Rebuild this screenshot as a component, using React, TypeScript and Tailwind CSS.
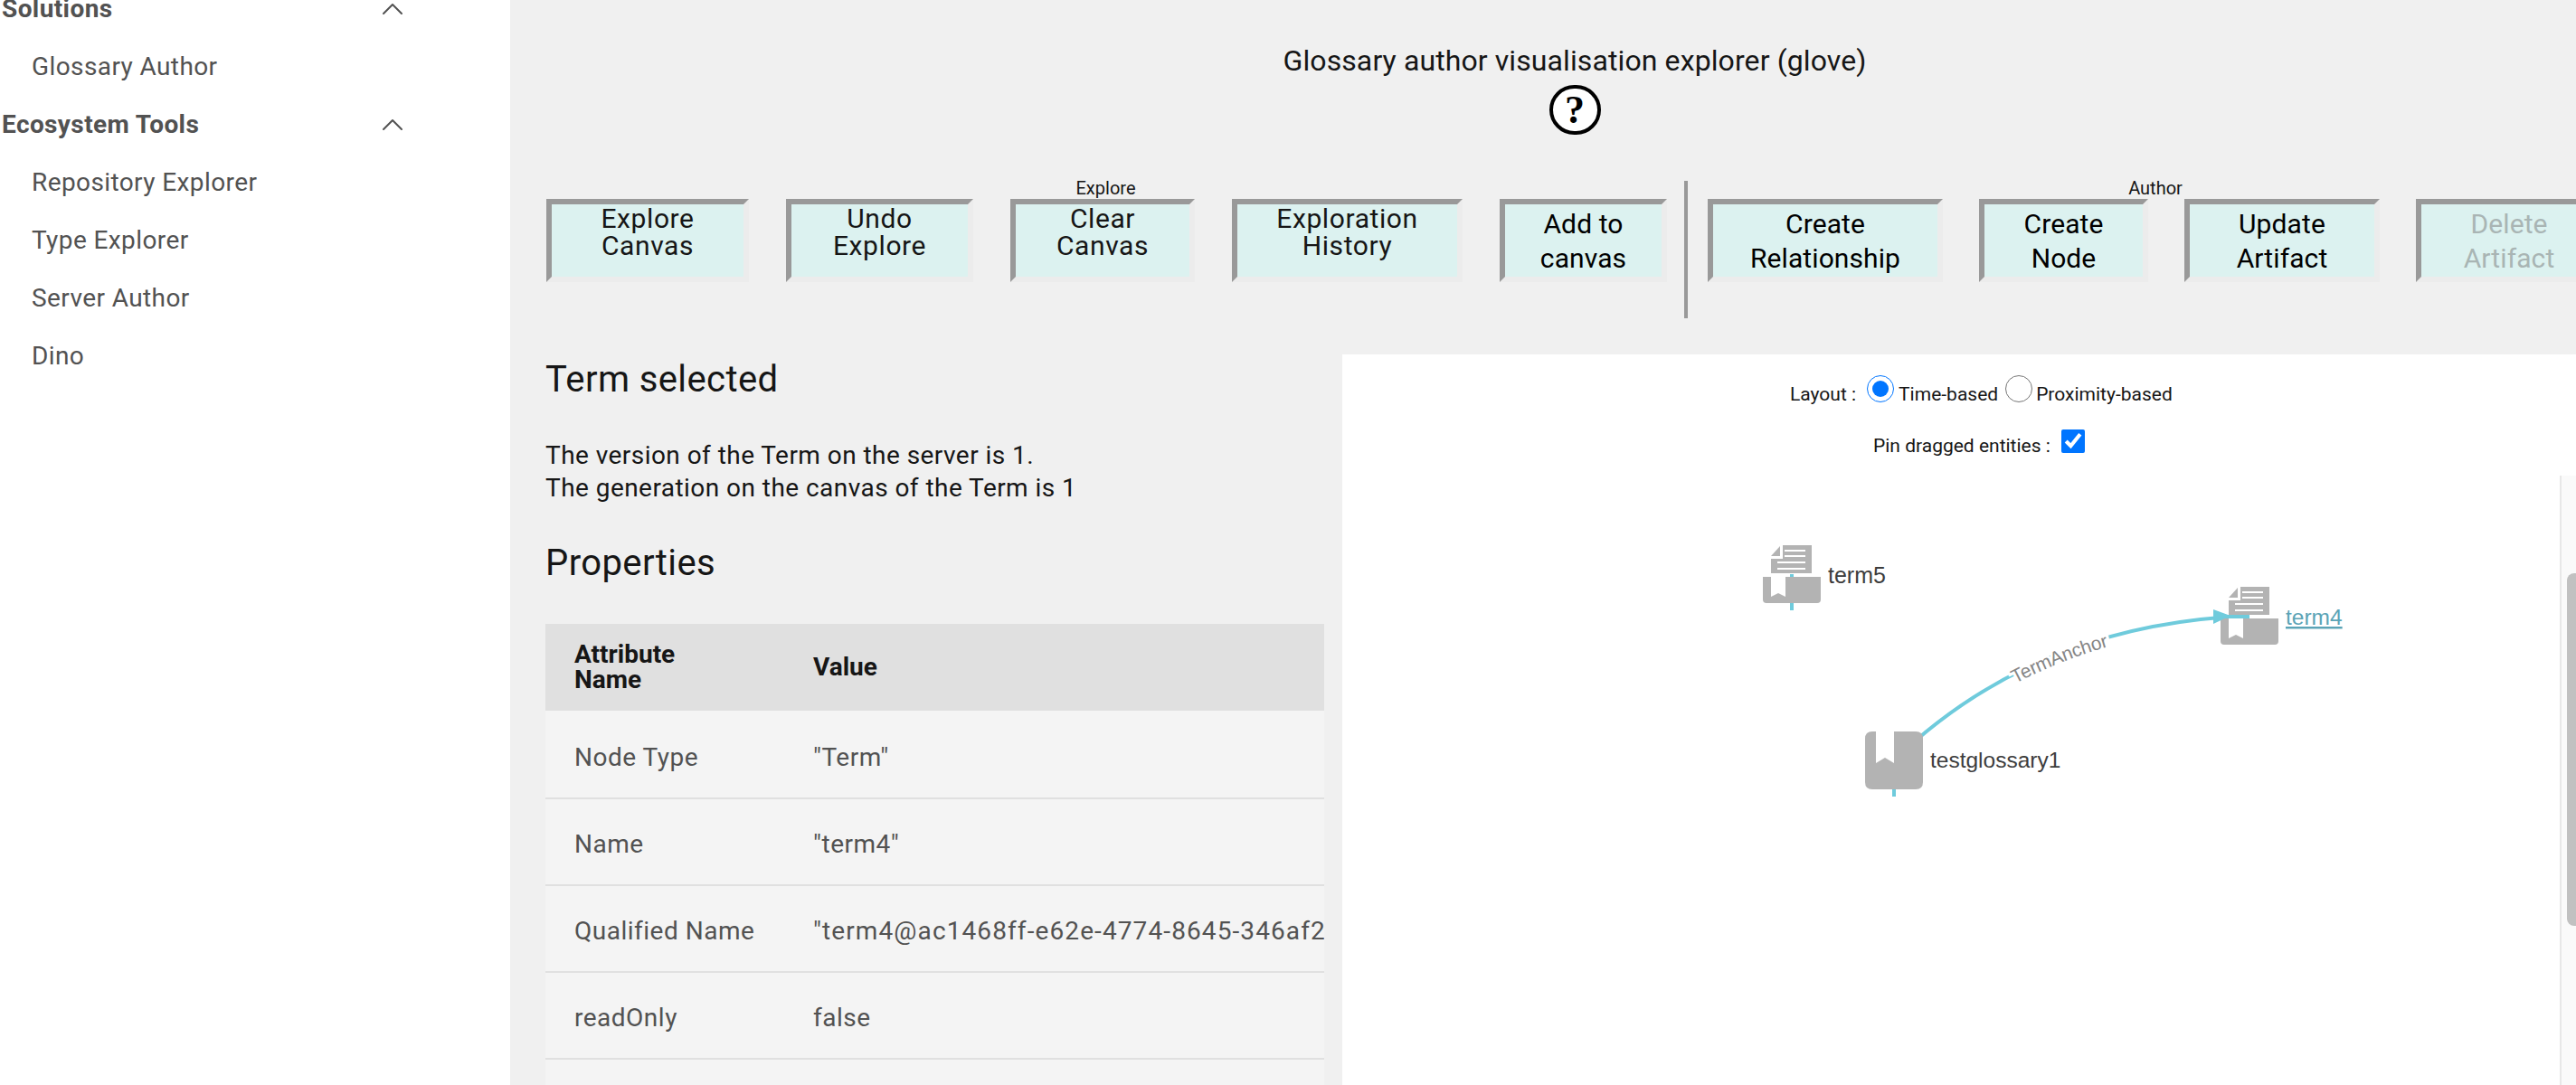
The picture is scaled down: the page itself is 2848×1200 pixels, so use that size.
import { ChevronUp } from 'lucide-react'

const exploreButtons = [
  { top: 'Explore', bottom: 'Canvas', width: 'w-[224px]' },
  { top: 'Undo', bottom: 'Explore', width: 'w-[207px]' },
  { top: 'Clear', bottom: 'Canvas', width: 'w-[204px]' },
  { top: 'Exploration', bottom: 'History', width: 'w-[255px]' },
]

const authorButtons = [
  { top: 'Create', bottom: 'Relationship', width: 'w-[260px]' },
  { top: 'Create', bottom: 'Node', width: 'w-[187px]' },
  { top: 'Update', bottom: 'Artifact', width: 'w-[216px]' },
  { top: 'Delete', bottom: 'Artifact', width: 'w-[206px]', disabled: true },
]

const rows = [
  { name: 'Node Type', value: '"Term"', tracking: 'tracking-[0.5px]' },
  { name: 'Name', value: '"term4"', tracking: 'tracking-[0.5px]' },
  { name: 'Qualified Name', value: '"term4@ac1468ff-e62e-4774-8645-346af2b5e7c1"', tracking: 'tracking-[1.1px]' },
  { name: 'readOnly', value: 'false', tracking: 'tracking-[0.5px]' },
  { name: '', value: '', tracking: '' },
]

function ToolButton({ top, bottom, width, tight, disabled }: { top: string; bottom: string; width: string; tight?: boolean; disabled?: boolean }) {
  const textColor = disabled ? 'text-[#a9b5b4]' : tight ? 'text-[#161616]' : 'text-black'
  return (
    <button
      className={`${width} ${textColor} h-[92px] shrink-0 border-[6px] border-t-[#999999] border-l-[#999999] border-r-[#ececec] border-b-[#ececec] bg-[#dcf2f0] text-center text-[30px] flex flex-col items-center ${tight ? 'leading-[30px] pt-[1px] tracking-[0.6px]' : 'leading-[38px] pt-[1px] justify-center tracking-[0.1px]'}`}
    >
      <span>{top}</span>
      <span>{bottom}</span>
    </button>
  )
}

function TermIcon({ x, y }: { x: number; y: number }) {
  return (
    <g transform={`translate(${x} ${y})`}>
      <path d="M9 12 L19 1 L19 12 Z" fill="#b3b3b3" />
      <path d="M22 0 H54 V31 H9 V15 H22 Z" fill="#b3b3b3" />
      <path d="M24 6 H47 M24 12 H47 M16 19 H47 M16 26 H47" stroke="#ffffff" strokeWidth="2" />
      <path d="M0 35 H64 V60 Q64 64 60 64 H4 Q0 64 0 60 Z" fill="#b3b3b3" />
      <path d="M9 35 H25 V57 L17 53 L9 57 Z" fill="#ffffff" />
    </g>
  )
}

function GraphCanvas() {
  const edge = 'M2094 841 Q2250 690 2487 681'
  return (
    <svg className="absolute inset-0" width="1364" height="808" viewBox="1484 392 1364 808">
      <path d="M1981 635 V675 M2094 870 V881" stroke="#6fcbdc" strokeWidth="4" fill="none" />
      <TermIcon x={1949} y={603} />
      <path id="edge-term-anchor" d={edge} stroke="#6fcbdc" strokeWidth="4" fill="none" />
      <path d="M2094 809 m-24 0 h48 q8 0 8 8 v48 q0 8 -8 8 h-48 q-8 0 -8 -8 v-48 q0 -8 8 -8 Z" fill="#b3b3b3" />
      <path d="M2074 809 H2094 V844 L2084 838 L2074 844 Z" fill="#ffffff" />
      <TermIcon x={2455} y={649} />
      <path d="M2447 682 H2487" stroke="#6fcbdc" strokeWidth="4" fill="none" />
      <path d="M2447 674 L2466 681 L2447 690 Z" fill="#6fcbdc" />
      {/* white copy behind the label cuts the edge line */}
      <text aria-hidden="true" fontFamily='"Liberation Sans", sans-serif' fontSize="21" fill="#ffffff" stroke="#ffffff" strokeWidth="6" dy="10">
        <textPath href="#edge-term-anchor" startOffset="50%" textAnchor="middle">TermAnchor</textPath>
      </text>
      <text fontFamily='"Liberation Sans", sans-serif' fontSize="21" fill="#858585" dy="10">
        <textPath href="#edge-term-anchor" startOffset="50%" textAnchor="middle">TermAnchor</textPath>
      </text>
      <text x="2021" y="645" fontFamily='"Liberation Sans", sans-serif' fontSize="25" fill="#3d3d3d">term5</text>
      <text x="2134" y="849" fontFamily='"Liberation Sans", sans-serif' fontSize="24.5" fill="#3d3d3d">testglossary1</text>
      <text x="2527" y="691" fontFamily='"Liberation Sans", sans-serif' fontSize="24.5" fill="#5ba4b6" textDecoration="underline">term4</text>
    </svg>
  )
}

export default function App() {
  return (
    <div className="flex h-[1200px] w-[2848px] overflow-hidden bg-white font-['Roboto',sans-serif]">
      {/* Side nav */}
      <aside className="w-[564px] shrink-0 -mt-[22px] text-[28px] text-[#525252] tracking-[0.4px]">
        <div className="h-16 flex items-center justify-between pl-[2px] pr-[110px] font-bold">
          <span>Solutions</span>
          <ChevronUp className="w-10 h-10" strokeWidth={1.2} />
        </div>
        <div className="h-16 flex items-center pl-[35px]">Glossary Author</div>
        <div className="h-16 flex items-center justify-between pl-[2px] pr-[110px] font-bold">
          <span>Ecosystem Tools</span>
          <ChevronUp className="w-10 h-10" strokeWidth={1.2} />
        </div>
        <div className="h-16 flex items-center pl-[35px]">Repository Explorer</div>
        <div className="h-16 flex items-center pl-[35px]">Type Explorer</div>
        <div className="h-16 flex items-center pl-[35px]">Server Author</div>
        <div className="h-16 flex items-center pl-[35px]">Dino</div>
      </aside>

      {/* Main area */}
      <main className="flex-1 overflow-hidden bg-[#f0f0f0]">
        <div className="w-[2354px]">
          <div className="h-[197px] pt-[46px] flex flex-col items-center">
            <h1 className="text-[32px] leading-[42px] tracking-[0.1px] text-[#161616]">Glossary author visualisation explorer (glove)</h1>
            <div className="mt-[6px] w-[57px] h-[55px] rounded-full border-[4px] border-black bg-white flex items-center justify-center font-['Liberation_Serif',serif] font-bold text-[44px] leading-none text-black">?</div>
          </div>

          {/* Toolbar */}
          <div className="h-[195px] flex pl-[40px]">
            <div className="flex flex-col items-center w-[1237px]">
              <div className="h-[23px] text-[20px] leading-[23px] text-[#161616]">Explore</div>
              <div className="flex gap-[41px] w-full">
                {exploreButtons.map((b) => (
                  <ToolButton key={b.top + b.bottom} {...b} tight />
                ))}
                <ToolButton top="Add to" bottom="canvas" width="w-[185px]" />
              </div>
            </div>
            <div className="ml-[21px] mr-[22px] mt-[3px] h-[152px] w-[4px] bg-[#999999]" />
            <div className="flex flex-col items-center w-[990px]">
              <div className="h-[23px] text-[20px] leading-[23px] text-[#161616]">Author</div>
              <div className="flex gap-[40px] w-full">
                {authorButtons.map((b) => (
                  <ToolButton key={b.top + b.bottom} {...b} />
                ))}
              </div>
            </div>
          </div>

          {/* Details and canvas */}
          <div className="flex h-[808px]">
            <section className="w-[920px] shrink-0 pl-[39px] pr-[20px] text-[#161616]">
              <h2 className="text-[40px] leading-[52px] mt-[2px] tracking-[0.4px]">Term selected</h2>
              <p className="mt-[40px] text-[28px] leading-[36px] tracking-[0.45px]">The version of the Term on the server is 1.<br />The generation on the canvas of the Term is 1</p>
              <h2 className="mt-[39px] text-[40px] leading-[52px] tracking-[0.4px]">Properties</h2>
              <div className="mt-[41px] w-[861px] text-[28px]">
                <div className="h-[98px] flex items-center bg-[#e0e0e0] border-b-2 border-[#f4f4f4] font-bold leading-[28px] text-[#161616]">
                  <div className="w-[296px] pl-[32px] pr-[90px]">Attribute Name</div>
                  <div>Value</div>
                </div>
                {rows.map((r, i) => (
                  <div key={i} className="h-[96px] flex items-center pt-[6px] bg-[#f4f4f4] border-b-2 border-[#e0e0e0] text-[#525252]">
                    <div className="w-[296px] pl-[32px] shrink-0 tracking-[0.5px]">{r.name}</div>
                    <div className={`whitespace-nowrap overflow-hidden ${r.tracking}`}>{r.value}</div>
                  </div>
                ))}
              </div>
            </section>

            <section className="relative w-[1364px] h-[808px] bg-white text-[21px] text-[#161616]">
              <GraphCanvas />
              <div className="relative pt-[24px] flex items-center h-[66px] pl-[495px]">
                <span>Layout :</span>
                <input type="radio" name="layout" defaultChecked className="ml-[12px] mr-[5px] w-[30px] h-[30px] -mt-[14px]" />
                <span>Time-based</span>
                <input type="radio" name="layout" className="ml-[8px] mr-[4px] w-[30px] h-[30px] -mt-[14px]" />
                <span>Proximity-based</span>
              </div>
              <div className="relative flex items-center h-[40px] mt-[16px] pl-[587px]">
                <span>Pin dragged entities :</span>
                <input type="checkbox" defaultChecked className="ml-[12px] w-[26px] h-[26px] -mt-[12px]" />
              </div>
              <div className="absolute right-0 top-[134px] bottom-0 w-[18px] bg-[#fafafa] border-l-2 border-[#e8e8e8]">
                <div className="absolute left-[6px] right-0 top-[108px] h-[390px] rounded-l-[8px] bg-[#c1c1c1]" />
              </div>
            </section>
          </div>
        </div>
      </main>
    </div>
  )
}
